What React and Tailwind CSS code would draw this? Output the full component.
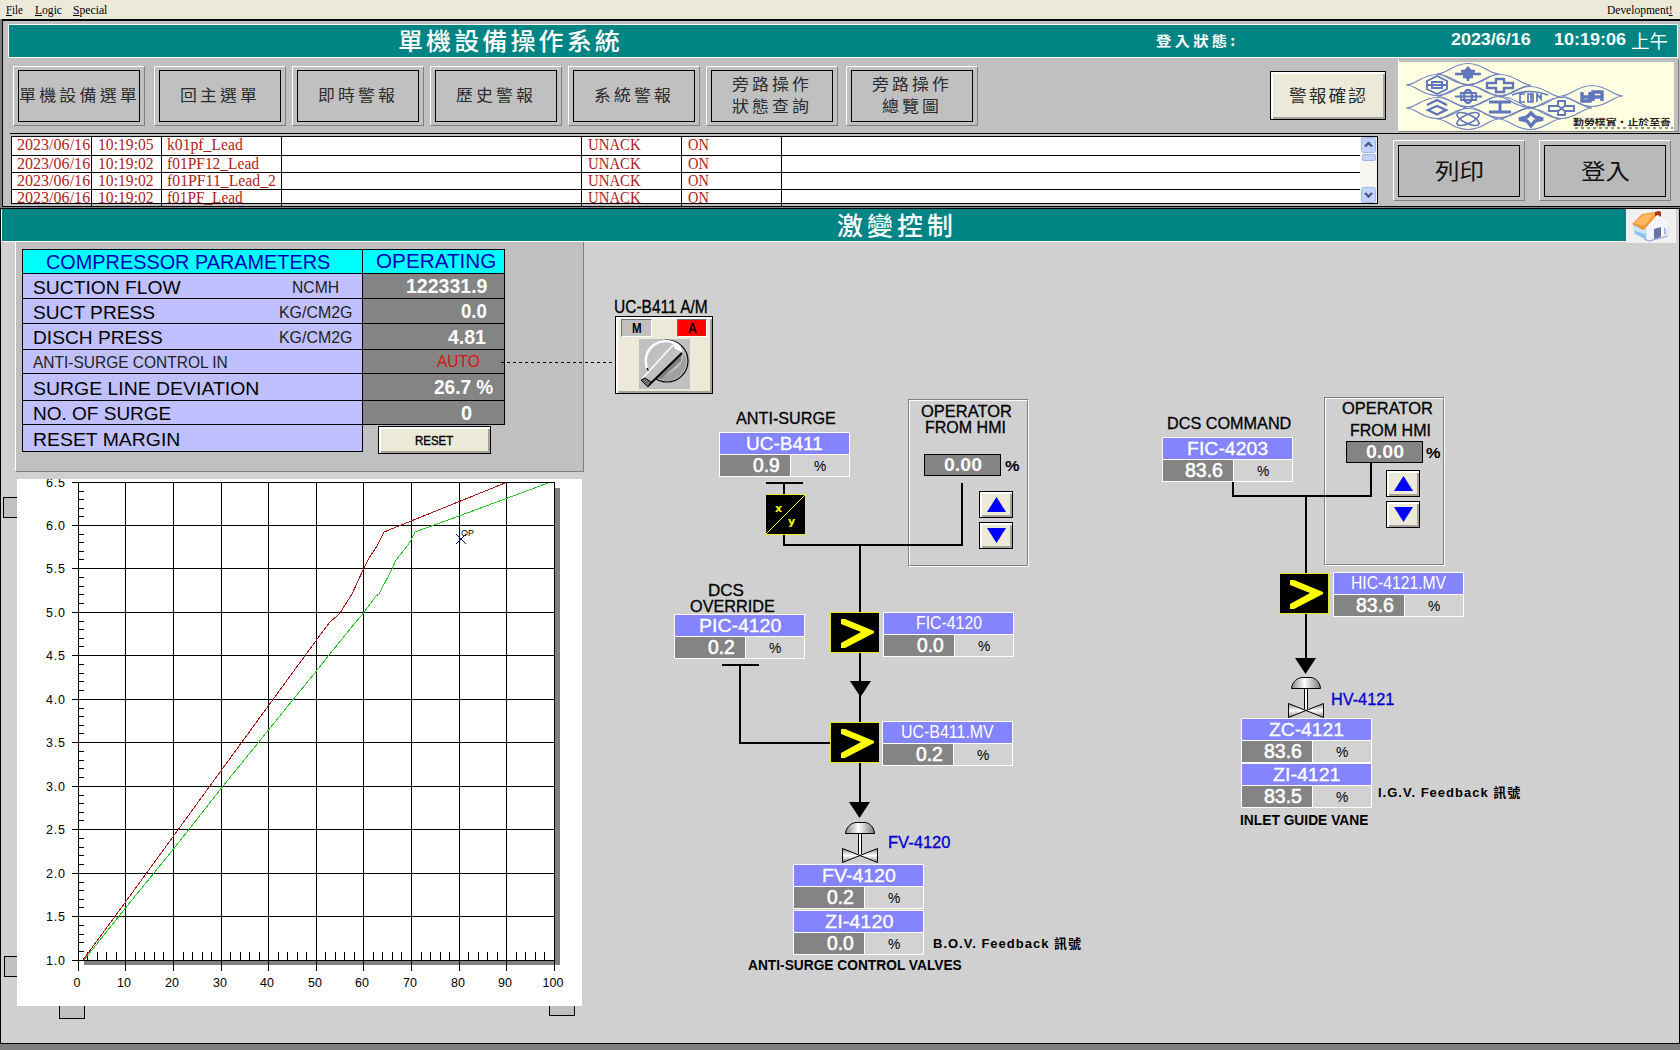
import { useLayoutEffect, useRef, useState } from "react";

/* Text squeezed or stretched horizontally to a given width. */
function Fit({ w, className = "", children }) {
  const ref = useRef(null);
  const [k, setK] = useState(1);
  useLayoutEffect(() => {
    if (w && ref.current) setK(w / ref.current.offsetWidth);
  }, [w, children]);
  return (
    <span className={"inline-flex leading-none " + className} style={{ width: w }}>
      <span ref={ref} className="inline-block shrink-0 origin-left whitespace-pre" style={{ transform: `scaleX(${k})` }}>
        {children}
      </span>
    </span>
  );
}

const cjk = "font-['Noto_Sans_CJK_TC',sans-serif]";

function NavButton({ lines, className = "", w }) {
  return (
    <div className={"h-[60px] w-[132px] shrink-0 border border-t-white border-l-white border-r-[#808080] border-b-[#808080] px-[4px] py-[3px] " + className}>
      <div className={"flex h-[52px] w-[122px] flex-col items-center justify-center gap-[6px] border border-black pb-[4px] text-[16px] text-[#2c2c2c] " + cjk}>
        {lines.map((l, i) => (
          <Fit key={l} w={w[i]} className="tracking-[3px]">{l}</Fit>
        ))}
      </div>
    </div>
  );
}

function BigButton({ label, className = "" }) {
  return (
    <div className={"h-[61px] w-[132px] shrink-0 border border-t-white border-l-white border-r-[#808080] border-b-[#808080] px-[4px] py-[4px] " + className}>
      <div className={"flex h-[52px] w-[122px] items-center justify-center border border-black bg-[#b9b9b9] pb-[5px] text-[22px] text-[#111] " + cjk}>
        <Fit w={49}>{label}</Fit>
      </div>
    </div>
  );
}

const bevel = "border border-black bg-[#ece9d8] shadow-[inset_2px_2px_0_#fff,inset_-2px_-2px_0_#a5a296]";

const eyes = [
  [78, 23], [47, 34], [110, 34], [78, 45], [140, 46], [202, 45],
  [47, 57], [110, 56], [171, 57], [78, 68], [140, 68],
];
function Logo() {
  return (
    <div className="mt-[1px] h-[73px] w-[281px] shrink-0 border border-t-[#b8b8b8] border-l-white border-r-[#808080] border-b-[#808080] pt-[2px]">
      <svg className="block" width="275" height="69" viewBox="9 11 275 69">
        <rect x="9" y="11" width="275" height="69" fill="#ffffe1" />
        <g fill="none" stroke="#6d80c0" strokeWidth="1.2">
          {eyes.map(([x, y]) => (
            <path key={x + "-" + y} transform={`translate(${x} ${y})`} d="M-31 0C-21 0-15-10.500 0-10.500S21 0 31 0M-31 0C-21 0-15 10.500 0 10.500S21 0 31 0" />
          ))}
        </g>
        <g fill="none" stroke="#5f76bd" strokeWidth="2.400">
          <path d="M78 16v14M65 23h26M71 20h14M73 26h10" />
          <path d="M73 22l5-5 5 5-5 6z" fill="#5f76bd" />
          <path d="M37 30l10-5 10 5v8l-10 5-10-5zM38 34h18M42 31h10v6H42z" strokeWidth="1.900" />
          <path d="M106 28h8v4h9v5h-9v4h-8v-4h-9v-5h9z" />
          <ellipse cx="78" cy="45.500" rx="4" ry="6.500" />
          <path d="M65 45.500h27M71 42h15v7H71z" strokeWidth="1.800" />
          <path d="M37 54l10-5 10 5M38 59l9-4 9 4-9 4.500z" />
          <path d="M99 51h22M99 61h22M110 51v10" strokeWidth="3" />
          <path d="M122 44q18-7 36 0M135 43h-5v8h5M138 43h5v8h-5zM141 42v9M147 51v-8l4 5v-5" strokeWidth="1.700" />
          <path d="M192 41v9h8v-9M192 46h9M203 50v-9h9v9M203 46h9M192 50h8" strokeWidth="3.400" />
          <path d="M168 50h7v5h9v5h-9v4h-7v-4h-9v-5h9zM167 54l9 7M176 54l-9 7" strokeWidth="1.900" />
          <ellipse cx="78" cy="68" rx="12" ry="4.500" transform="rotate(25 78 68)" strokeWidth="1.600" />
          <ellipse cx="78" cy="68" rx="12" ry="4.500" transform="rotate(-25 78 68)" strokeWidth="1.600" />
          <path d="M141 62l4 4 8 2-8 2-4 5-4-5-8-2 8-2z" strokeWidth="3.500" />
        </g>
        <text x="183" y="73.500" fontSize="8.500" fontWeight="700" textLength="98" lengthAdjust="spacingAndGlyphs" fontFamily="Noto Sans CJK TC, sans-serif" fill="#222">勤勞樸實・止於至善</text>
        <path d="M185 77h98" stroke="#333" strokeWidth="1" strokeDasharray="3 3" />
      </svg>
    </div>
  );
}

function House() {
  return (
    <svg className="block" width="38" height="32" viewBox="0 0 38 32">
      <path d="M1 14l14 5v11L3 24z" fill="#8cc4f4" />
      <path d="M1 15l14 5v5L1 20z" fill="#c9e6fb" />
      <path d="M14 18l12-12 11 11-2 9-18 5-3-1z" fill="#f3f5fc" stroke="#b9c3dd" strokeWidth=".6" />
      <path d="M0 14L10 4l13-2 3 3-12 13-3 2z" fill="#f0983a" />
      <path d="M2 13L11 5l12-2-11 13z" fill="#fbb860" />
      <path d="M14 19L26 5l11 11" fill="none" stroke="#fff" strokeWidth="1.500" />
      <path d="M23 2l4-1 2 1v5l-3-2-3 1z" fill="#a8341c" />
      <path d="M22 19l7-2v10l-7 2z" fill="#6a74a4" />
      <path d="M32 17l2 2v5l-2 1z" fill="#a9b9e6" />
      <path d="M12 29l5 2 19-5" stroke="#8fa6d8" fill="none" />
    </svg>
  );
}

const alarms = [
  ["10:19:05", "k01pf_Lead", 76],
  ["10:19:02", "f01PF12_Lead", 92],
  ["10:19:02", "f01PF11_Lead_2", 109],
  ["10:19:02", "f01PF_Lead", 76],
];

function AlarmTable() {
  return (
    <div className="ml-[11px] mt-[2px] flex h-[68px] w-[1367px] shrink-0 border border-black bg-white">
      <div className="w-[1348px] font-['Liberation_Serif',serif] text-[16.5px] text-[#b01c1c]">
        {alarms.map(([t, n, w], i) => {
          const shift = i === 0 ? "" : "-mt-[3px]";
          return (
            <div key={n} className={"grid grid-cols-[80px_70px_120px_300px_100px_100px_1fr] divide-x divide-black border-b border-black leading-none " + (i === 0 ? "h-[19px]" : i === 3 ? "h-[14px] border-b-0" : "h-[17px]")}>
              <div className="pl-[5px]"><Fit w={73} className={shift}>2023/06/16</Fit></div>
              <div className="pl-[6px]"><Fit w={56} className={shift}>{t}</Fit></div>
              <div className="pl-[5px]"><Fit w={w} className={shift}>{n}</Fit></div>
              <div />
              <div className="pl-[6px]"><Fit w={53} className={shift}>UNACK</Fit></div>
              <div className="pl-[6px]"><Fit w={21} className={shift}>ON</Fit></div>
              <div />
            </div>
          );
        })}
      </div>
      <div className="flex w-[17px] flex-col items-center bg-[#f6f5f0]">
        <ScrollArrow d="M4 9.500l3.500-3.500 3.500 3.500" />
        <div className="mt-px h-[7px] w-[14px] rounded-[2px] border border-[#9ab4ea] bg-[#c3d3fb]" />
        <div className="mt-auto"><ScrollArrow d="M4 6l3.500 3.500L11 6" /></div>
      </div>
    </div>
  );
}
function ScrollArrow({ d }) {
  return (
    <svg className="block" width="15" height="16" viewBox="0 0 15 16">
      <rect x=".5" y=".5" width="14" height="15" rx="2" fill="#c1d2fc" stroke="#9fb8ee" />
      <path d={d} fill="none" stroke="#435c8c" strokeWidth="2.400" />
    </svg>
  );
}

/* ---------- parameter table ---------- */
const params = [
  { h: "h-[25px]", name: "SUCTION FLOW", w: 148, unit: "NCMH", uw: 47, ur: "mr-[23px]", val: "122331.9", vw: 81, vr: "mr-[17px]" },
  { h: "h-[25px]", name: "SUCT PRESS", w: 122, unit: "KG/CM2G", uw: 73, ur: "mr-[10px]", val: "0.0", vw: 26, vr: "mr-[17px]" },
  { h: "h-[26px]", name: "DISCH PRESS", w: 130, unit: "KG/CM2G", uw: 73, ur: "mr-[10px]", val: "4.81", vw: 38, vr: "mr-[18px]" },
  { h: "h-[24px]", name: "ANTI-SURGE CONTROL IN", w: 195, small: true, val: "AUTO", vw: 43, vr: "mr-[24px]" },
  { h: "h-[27px]", name: "SURGE LINE DEVIATION", w: 226, val: "26.7 %", vw: 59, vr: "mr-[11px]" },
  { h: "h-[24px]", name: "NO. OF SURGE", w: 138, val: "0", vw: 11, vr: "mr-[32px]" },
  { h: "h-[27px]", name: "RESET MARGIN", w: 147 },
];

function ParamPanel() {
  return (
    <div className="ml-[15px] h-[230px] w-[569px] border-b border-l border-r border-b-[#808080] border-l-white border-r-[#808080] bg-[#c0c0c0] pl-[6px] pt-[7px]">
      <div className="w-[483px] border-l border-t border-black">
        <div className="flex h-[24px] text-[20px] text-[#0000b4]">
          <div className="flex w-[340px] items-center border-b border-r border-black bg-[#00ffff] pl-[23px]"><Fit w={284}>COMPRESSOR PARAMETERS</Fit></div>
          <div className="flex w-[142px] items-center border-b border-r border-black bg-[#00ffff] pb-px pl-[13px]"><Fit w={120}>OPERATING</Fit></div>
        </div>
        {params.map((p) => (
          <div key={p.name} className={"flex " + p.h}>
            <div className="flex w-[340px] items-center justify-between border-b border-r border-black bg-[#c0c0ff] pl-[10px] pt-[2px] text-black">
              <Fit w={p.w} className={p.small ? "text-[17px] text-[#222]" : "text-[19px]"}>{p.name}</Fit>
              {p.unit && <Fit w={p.uw} className={"text-[17px] text-[#222] " + p.ur}>{p.unit}</Fit>}
            </div>
            {p.val ? (
              <div className="flex w-[142px] items-center justify-end border-b border-r border-black bg-[#848484]">
                <Fit w={p.vw} className={p.vr + (p.small ? " text-[17px] text-[#e01010]" : " text-[20px] font-bold text-white")}>{p.val}</Fit>
              </div>
            ) : (
              <div className="flex w-[142px] pl-[15px] pt-px">
                <div className={"flex h-[28px] w-[113px] items-center justify-center pr-[2px] text-[13px] font-medium " + bevel}>
                  <Fit w={38} className="[-webkit-text-stroke:0.4px_black]">RESET</Fit>
                </div>
              </div>
            )}
          </div>
        ))}
      </div>
    </div>
  );
}

/* ---------- chart ---------- */
const gx = [78.5, 125.5, 173.5, 221.5, 268.5, 316.5, 363.5, 411.5, 459.5, 506.5, 554.5];
const gy = [482.5, 525.5, 568.5, 612.5, 655.5, 699.5, 742.5, 786.5, 829.5, 873.5, 916.5, 960.5];
const between = (a) => a.slice(0, -1).flatMap((v, i) => [1, 2, 3, 4].map((k) => Math.floor(v + ((a[i + 1] - v) * k) / 5) + 0.5));

function Chart() {
  return (
    <svg className="ml-[17px] mt-[7px] block" width="565" height="527" viewBox="17 479 565 527" fontFamily="Liberation Sans, sans-serif" fontSize="12.500">
      <rect x="17" y="479" width="565" height="527" fill="#fff" />
      <path d="M555 488h5v477H84v-4h471z" fill="#808080" />
      <g stroke="#000" strokeWidth="1" shapeRendering="crispEdges">
        {gx.map((x) => <path key={x} d={`M${x} 482V971`} />)}
        {gy.map((y) => <path key={y} d={`M72 ${y}H555`} />)}
        {between(gy).map((y) => <path key={y} d={`M79 ${y}h5`} />)}
        {between(gx).map((x) => <path key={x} d={`M${x} 952v8`} />)}
      </g>
      <polyline fill="none" stroke="#a81818" shapeRendering="crispEdges" points="83,960 125.5,902 173.5,836 221.5,770 273,699.5 300,662.500 316.5,640 330,622 334,618.500 337,616 340,613 345,605 352,594 358,581 363.5,569 369,558 377,546 384,532 505,483" />
      <polyline fill="none" stroke="#2fc82f" shapeRendering="crispEdges" points="84,960 125.5,908 173.5,849 221.5,788 268.5,730 300,691 316.5,671 329,655 355,623 363.5,613 376,596 379,594 392,569 396,560 408,545 411.5,539 415,532 459,516 548,483" />
      <path d="M456 534l10 10M466 534l-10 10" stroke="#0000a0" />
      <text x="461" y="536" fontSize="9.500" textLength="13" lengthAdjust="spacingAndGlyphs">OP</text>
      {gy.map((y, i) => (
        <text key={y} x="46" y={y + 4} textLength="19">{(6.5 - i * 0.5).toFixed(1)}</text>
      ))}
      {gx.map((x, i) => (
        <text key={x} x={x - 1.5} y="987" textAnchor="middle">{i * 10}</text>
      ))}
    </svg>
  );
}

/* ---------- diagram ---------- */
const TOP = 242;
const at = (x, y) => ({ left: x, top: y - TOP });

/* A caption whose capitals are centred on y. */
function Caption({ x, y, w, size = "text-[17px]", className = "", children }) {
  return (
    <div className={"absolute flex h-[20px] items-center " + size + " " + className} style={at(x, y - 10)}>
      <Fit w={w}>{children}</Fit>
    </div>
  );
}

function Tag({ x, y, name, w, val, thin }) {
  return (
    <div className="absolute h-[45px] w-[131px] border border-white text-white" style={at(x, y)}>
      <div className="flex h-[22px] items-center justify-center border-b border-white bg-[#8484ff] pb-px text-[19px]">
        <Fit w={w} className={thin ? "text-[18px]" : "[-webkit-text-stroke:0.3px_white]"}>{name}</Fit>
      </div>
      <div className="flex h-[21px]">
        <div className="flex w-[71px] items-center justify-end border-r border-white bg-[#848484] pb-px pr-[10px] text-[20px]">
          <Fit w={val.length > 3 ? 38 : 27} className="[-webkit-text-stroke:0.6px_white]">{val}</Fit>
        </div>
        <div className="flex flex-1 items-center justify-center bg-[#d2d2d2] text-[15px] text-black"><Fit w={12}>%</Fit></div>
      </div>
    </div>
  );
}

function Selector({ x, y }) {
  return (
    <div className="absolute h-[41px] w-[50px] border border-[#e8e820] bg-black" style={at(x, y)}>
      <svg className="block" width="48" height="39" viewBox="0 0 48 39">
        <path d="M10 6h4l29 12v2L14 35h-4v-5l20-11L10 11z" fill="#ff0" />
      </svg>
    </div>
  );
}

function OperatorBox({ x, y, h }) {
  return (
    <div className="absolute w-[121px] border border-l-[#808080] border-t-[#808080] border-b-white border-r-white" style={{ ...at(x, y), height: h }}>
      <div className="h-full border border-l-white border-t-white border-b-[#808080] border-r-[#808080]" />
    </div>
  );
}
function ValueBox({ x, y }) {
  return (
    <div className="absolute flex h-[22px] w-[77px] items-center justify-center border border-black bg-[#848484] pb-px text-[19px] font-bold text-white" style={at(x, y)}>
      <Fit w={38}>0.00</Fit>
    </div>
  );
}
function Stepper({ x, y }) {
  return (
    <div className="absolute flex flex-col gap-[4px]" style={at(x, y)}>
      {["M17.500 6l9.500 15h-19z", "M17.500 21l9.500-15h-19z"].map((d) => (
        <div key={d} className={"h-[27px] w-[34px] " + bevel}>
          <svg className="-ml-px -mt-px block" width="34" height="27" viewBox="0 0 34 27"><path d={d} fill="#00f" /></svg>
        </div>
      ))}
    </div>
  );
}

function Valve({ x, y }) {
  return (
    <g transform={`translate(${x} ${y})`} stroke="#000" strokeWidth="1">
      <path d="M-14.500 11.500C-14 4-7 .5-4 .5H5C8 .5 14 4 14.500 11.500z" fill="url(#metal)" />
      <path d="M-1.500 12v20M1.500 12v20" />
      <path d="M0 12v20" stroke="#fff" strokeWidth="2" />
      <path d="M-17.500 26.500L0 33.500-17.500 40.500zM17.500 26.500L0 33.500 17.500 40.500z" fill="url(#metalv)" />
    </g>
  );
}

function Knob() {
  return (
    <svg className="absolute left-[23px] top-[22px]" width="51" height="50" viewBox="0 0 51 50">
      <rect width="51" height="50" fill="#c0c0c0" />
      <circle cx="28" cy="22" r="21" fill="#c0c0c0" stroke="#000" strokeWidth="1.200" />
      <path d="M8 29A20 20 0 0 1 41 8" fill="none" stroke="#fff" strokeWidth="2.500" />
      <path d="M44 15C45 24 39 32 19 39l7 3C40 42 49 31 47 18z" fill="#a0a0a0" />
      <path d="M43 14L42 22 22 40 17 39z" fill="#808080" />
      <path d="M2 41L34 5l8 3 1 7L9 47z" fill="#c0c0c0" />
      <path d="M34 5l8 3 1 5-5-2-3-3z" fill="#fff" />
      <path d="M2 41L34 6" stroke="#fff" strokeWidth="1.500" />
      <path d="M43 14L9 47" stroke="#000" strokeWidth="2" />
      <path d="M2 41l4-2 6 4-3 5z" fill="#707070" stroke="#000" />
    </svg>
  );
}

function Diagram() {
  return (
    <div className="pointer-events-none absolute inset-0">
      <OperatorBox x={908} y={399} h={168} />
      <OperatorBox x={1324} y={397} h={169} />
      <svg className="absolute inset-0" width="1680" height="801" viewBox="0 242 1680 801">
        <defs>
          <linearGradient id="metal" x1="0" x2="1"><stop offset="0" stopColor="#888" /><stop offset=".45" stopColor="#fff" /><stop offset="1" stopColor="#777" /></linearGradient>
          <linearGradient id="metalv" x1="0" x2="0" y1="0" y2="1"><stop offset="0" stopColor="#888" /><stop offset=".5" stopColor="#fff" /><stop offset="1" stopColor="#888" /></linearGradient>
        </defs>
        <path d="M501 362.500H615" stroke="#000" strokeDasharray="3 3" />
        <g fill="none" stroke="#000" strokeWidth="2">
          <path d="M766 483h37M784 483v62h178V483M860 545v267M722 665h37M740 665v78h92" />
          <path d="M1233 482v14h138V463M1306 496v166" />
        </g>
        <path d="M850 681h21l-10.500 16zM849 802h21l-10.500 16zM1295 658h21l-10.500 16z" />
        <Valve x={860} y={822} />
        <Valve x={1306} y={677} />
      </svg>

      <Caption x={614} y={306.5} w={94} size="text-[18px]" className="[-webkit-text-stroke:0.3px_black]">UC-B411 A/M</Caption>
      <div className={"absolute h-[78px] w-[98px] text-[15px] font-bold leading-none " + bevel} style={at(615, 316)}>
        <div className="flex justify-between px-[5px] pt-[2px]">
          <div className="flex h-[18px] w-[31px] items-center justify-center border border-l-[#707070] border-t-[#707070] border-b-white border-r-white bg-[#c0c0c0] pb-[2px]"><Fit w={10}>M</Fit></div>
          <div className="flex h-[18px] w-[30px] items-center justify-center border border-l-[#707070] border-t-[#707070] border-b-white border-r-white bg-[#ff0000] pb-[2px]"><Fit w={9}>A</Fit></div>
        </div>
        <Knob />
      </div>

      <Caption x={736} y={418.5} w={100} className="[-webkit-text-stroke:0.3px_black]">ANTI-SURGE</Caption>
      <Tag x={719} y={432} name="UC-B411" w={77} val="0.9" />
      <div className="absolute h-[41px] w-[41px] border border-[#e8e820] bg-black" style={at(765, 494)}>
        <svg className="block" width="39" height="39" viewBox="0 0 39 39" fill="#ff0" fontFamily="DejaVu Sans, sans-serif" fontWeight="700" fontSize="11">
          <path d="M0 39L39 0" stroke="#ff0" />
          <text x="9" y="17">x</text>
          <text x="22" y="30">y</text>
        </svg>
      </div>

      <Caption x={921} y={411.5} w={91} className="[-webkit-text-stroke:0.3px_black]">OPERATOR</Caption>
      <Caption x={925} y={427.5} w={81} className="[-webkit-text-stroke:0.3px_black]">FROM HMI</Caption>
      <ValueBox x={924} y={454} />
      <Caption x={1005} y={465.5} w={14} size="text-[14px]" className="font-bold">%</Caption>
      <Stepper x={979} y={491} />

      <Caption x={708} y={590.5} w={36} className="[-webkit-text-stroke:0.3px_black]">DCS</Caption>
      <Caption x={690} y={606.5} w={85} className="[-webkit-text-stroke:0.3px_black]">OVERRIDE</Caption>
      <Tag x={674} y={614} name="PIC-4120" w={82} val="0.2" />
      <Selector x={830} y={612} />
      <Tag x={883} y={612} name="FIC-4120" w={66} val="0.0" thin />
      <Selector x={830} y={722} />
      <Tag x={882} y={721} name="UC-B411.MV" w={93} val="0.2" thin />

      <Caption x={888} y={842.5} w={62} size="text-[16px]" className="text-[#0000d0] [-webkit-text-stroke:0.3px_#0000d0]">FV-4120</Caption>
      <Tag x={793} y={864} name="FV-4120" w={74} val="0.2" />
      <Tag x={793} y={910} name="ZI-4120" w={68} val="0.0" />
      <Caption x={933} y={943} w={149} size="text-[13px]" className="font-['Liberation_Sans','Noto_Sans_CJK_TC',sans-serif] font-bold tracking-[1px]">B.O.V. Feedback 訊號</Caption>
      <Caption x={748} y={964.5} w={214} size="text-[14px]" className="font-bold">ANTI-SURGE CONTROL VALVES</Caption>

      <Caption x={1167} y={423.5} w={124} className="[-webkit-text-stroke:0.3px_black]">DCS COMMAND</Caption>
      <Tag x={1162} y={437} name="FIC-4203" w={81} val="83.6" />
      <Caption x={1342} y={408.5} w={91} className="[-webkit-text-stroke:0.3px_black]">OPERATOR</Caption>
      <Caption x={1350} y={430.5} w={81} className="[-webkit-text-stroke:0.3px_black]">FROM HMI</Caption>
      <ValueBox x={1346} y={441} />
      <Caption x={1426} y={453} w={14} size="text-[14px]" className="font-bold">%</Caption>
      <Stepper x={1386} y={470} />
      <Selector x={1279} y={573} />
      <Tag x={1333} y={572} name="HIC-4121.MV" w={95} val="83.6" thin />
      <Caption x={1331} y={699.5} w={63} size="text-[16px]" className="text-[#0000d0] [-webkit-text-stroke:0.3px_#0000d0]">HV-4121</Caption>
      <Tag x={1241} y={718} name="ZC-4121" w={75} val="83.6" />
      <Tag x={1241} y={763} name="ZI-4121" w={67} val="83.5" />
      <Caption x={1378} y={792} w={143} size="text-[13px]" className="font-['Liberation_Sans','Noto_Sans_CJK_TC',sans-serif] font-bold tracking-[1px]">I.G.V. Feedback 訊號</Caption>
      <Caption x={1240} y={819.5} w={128} size="text-[14px]" className="font-bold">INLET GUIDE VANE</Caption>
    </div>
  );
}

function Stub({ x, y, w, h }) {
  return <div className="absolute border border-black bg-[#c0c0c0]" style={{ ...at(x, y), width: w, height: h }} />;
}

export default function App() {
  return (
    <div className="flex h-[1050px] w-[1680px] flex-col overflow-hidden bg-[#808080] font-['Liberation_Sans',sans-serif]">
      <div className="flex h-[19px] shrink-0 items-center bg-[#ece9d8] font-['Liberation_Serif',serif] text-[12px] text-black">
        <div className="ml-[6px] w-[29px]"><Fit w={17}><u>F</u>ile</Fit></div>
        <div className="w-[38px]"><Fit w={27}><u>L</u>ogic</Fit></div>
        <div className="flex-1"><Fit w={34}><u>S</u>pecial</Fit></div>
        <div className="mr-[7px]"><Fit w={66}>Development<u>!</u></Fit></div>
      </div>

      <header className="ml-[2px] flex h-[188px] shrink-0 flex-col border-b border-l border-t-2 border-black bg-[#c0c0c0]">
        <div className="ml-[5px] mr-[2px] mt-[3px] flex h-[34px] shrink-0 items-center border border-white bg-[#008484] pb-[2px] text-white">
          <div className={"ml-[389px] w-[758px] text-[24px] font-medium tracking-[3px] " + cjk}><Fit w={225}>單機設備操作系統</Fit></div>
          <div className={"w-[295px] text-[14px] font-bold tracking-[3px] " + cjk}><Fit w={83}>登入狀態:</Fit></div>
          <div className="w-[103px] text-[17px] font-bold"><Fit w={80}>2023/6/16</Fit></div>
          <div className="w-[77px] text-[17px] font-bold"><Fit w={72}>10:19:06</Fit></div>
          <div className={"text-[18px] " + cjk}><Fit w={37}>上午</Fit></div>
        </div>

        <div className="flex h-[75px] shrink-0">
          <NavButton className="ml-[10px] mt-[8px]" lines={["單機設備選單"]} w={[121]} />
          <NavButton className="ml-[9px] mt-[8px]" lines={["回主選單"]} w={[80]} />
          <NavButton className="ml-[6px] mt-[8px]" lines={["即時警報"]} w={[80]} />
          <NavButton className="ml-[6px] mt-[8px]" lines={["歷史警報"]} w={[80]} />
          <NavButton className="ml-[6px] mt-[8px]" lines={["系統警報"]} w={[80]} />
          <NavButton className="ml-[6px] mt-[8px]" lines={["旁路操作", "狀態查詢"]} w={[80, 80]} />
          <NavButton className="ml-[8px] mt-[8px]" lines={["旁路操作", "總覽圖"]} w={[80, 60]} />
          <div className={"ml-[292px] mt-[13px] flex h-[49px] w-[116px] shrink-0 items-center justify-center pb-[2px] text-[17px] text-[#2c2c2c] tracking-[2px] " + bevel + " " + cjk}>
            <Fit w={79}>警報確認</Fit>
          </div>
          <div className="ml-[12px]"><Logo /></div>
        </div>

        <div className="ml-[7px] flex h-[73px] border-t border-black">
          <div className="-ml-[10px]"><AlarmTable /></div>
          <BigButton className="ml-[15px] mt-[6px]" label="列印" />
          <BigButton className="ml-[14px] mt-[6px]" label="登入" />
        </div>
      </header>

      <main className="mt-px flex h-[836px] shrink-0 flex-col border border-black bg-[#d0d0d0]">
        <div className="flex h-[33px] shrink-0 border-l border-white bg-[#d0d0d0]">
          <div className={"flex w-[1624px] items-center border-b border-white bg-[#008484] pb-[2px] pl-[835px] text-[25px] font-medium tracking-[4px] text-white " + cjk}>
            <Fit w={120}>激變控制</Fit>
          </div>
          <div className="flex h-[34px] w-[50px] items-center justify-center bg-[#f0f0f0]"><House /></div>
        </div>
        <div className="relative -ml-px h-[801px]">
          <Stub x={3} y={497} w={30} h={21} />
          <Stub x={4} y={956} w={30} h={21} />
          <Stub x={59} y={995} w={26} h={24} />
          <Stub x={549} y={995} w={26} h={21} />
          <div className="relative">
            <ParamPanel />
            <Chart />
          </div>
          <Diagram />
        </div>
      </main>
    </div>
  );
}
